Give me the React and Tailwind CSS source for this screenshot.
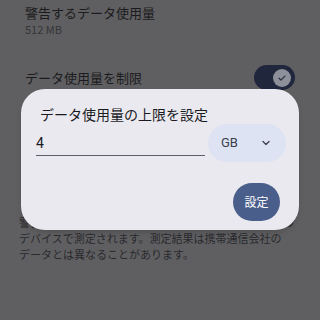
import React from "react";

export default function App() {
  return (
    <div
      className="relative w-[320px] h-[320px] overflow-hidden bg-[#5f5f61] text-[#1e1e22]"
      style={{ fontFamily: '"Noto Sans CJK JP", "Noto Sans", sans-serif' }}
    >
      {/* settings behind the scrim */}
      <div className="px-[25px] pt-[4px]">
        <div className="text-[13px] leading-[18px] text-[#1c1c20]">警告するデータ使用量</div>
        <div className="text-[11px] leading-[14px] text-[#353539]">512 MB</div>
        <div className="mt-[29px] flex items-center justify-between h-[25px]">
          <span className="text-[13px] leading-[18px] text-[#1c1c20]">データ使用量を制限</span>
          <div className="w-[41px] h-[25px] rounded-full bg-[#20263c] flex items-center justify-end pr-[4px]">
            <div className="w-[18px] h-[18px] rounded-full bg-[#8d909b] flex items-center justify-center">
              <svg width="10" height="10" viewBox="0 0 24 24" fill="none" stroke="#2a2f40" strokeWidth="3" strokeLinecap="round" strokeLinejoin="round">
                <path d="M5 12.5l4.5 4.5L19 7.5" />
              </svg>
            </div>
          </div>
        </div>
      </div>
      <div className="ml-[19px] mt-[124px] text-[11px] leading-[16px] text-[#2a2a2e] whitespace-nowrap">
        <div>警告とデータ上限の判定に使うデータ使用量はお使いの</div>
        <div>デバイスで測定されます。測定結果は携帯通信会社の</div>
        <div>データとは異なることがあります。</div>
      </div>

      {/* dialog */}
      <div className="absolute left-[21px] top-[89px] w-[278px] h-[141px] rounded-[24px] bg-[#e9e9ef] shadow-md">
        <div className="pt-[16px] pl-[19px] text-[14px] leading-[19px] text-[#1b1b1f]">データ使用量の上限を設定</div>
        <div className="flex items-start pl-[15px] pr-[13px]">
          <div className="w-[169px] h-[32px] border-b border-[#5c5e66] flex items-end pb-[2px]">
            <span className="text-[14px] leading-[20px] text-[#1b1b1f]" style={{ fontFamily: '"Roboto", "Noto Sans", sans-serif' }}>4</span>
          </div>
          <div className="ml-[3px] w-[78px] h-[38px] rounded-full bg-[#dde3f3] flex items-center pl-[13px] pr-[14px] justify-between">
            <span className="text-[13px] leading-[18px] text-[#3b3f4c]" style={{ fontFamily: '"Roboto", "Noto Sans", sans-serif' }}>GB</span>
            <svg width="12" height="12" viewBox="0 0 24 24" fill="none" stroke="#3b3f4c" strokeWidth="2.6" strokeLinecap="round" strokeLinejoin="round">
              <path d="M6 9l6 6 6-6" />
            </svg>
          </div>
        </div>
        <div className="flex justify-end pr-[19px] mt-[21px]">
          <button className="w-[47px] h-[38px] rounded-full bg-[#4a5e8c] text-white text-[12px] leading-[16px] flex items-center justify-center">
            設定
          </button>
        </div>
      </div>
    </div>
  );
}
